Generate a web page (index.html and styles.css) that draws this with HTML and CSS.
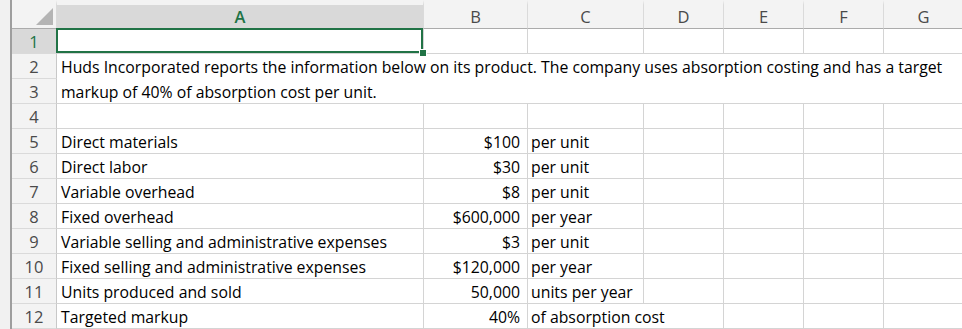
FILE: index.html
```html
<!DOCTYPE html>
<html lang="en">
<head>
    <meta charset="UTF-8">
    <title>Huds Incorporated</title>
    <link rel="stylesheet" href="styles.css">
</head>
<body>
    <div class="window">
        <div class="gutter"></div>
        <div class="sheet">
            <!-- column headers -->
            <div class="corner"><span class="corner-mark"></span></div>
            <div class="col-head active">A</div>
            <div class="col-head">B</div>
            <div class="col-head">C</div>
            <div class="col-head">D</div>
            <div class="col-head">E</div>
            <div class="col-head">F</div>
            <div class="col-head">G</div>

            <div class="row-head active">1</div>
            <div class="cell selected"></div>
            <div class="cell"></div><div class="cell"></div><div class="cell"></div>
            <div class="cell"></div><div class="cell"></div><div class="cell"></div>

            <div class="row-head">2</div>
            <div class="cell merged">Huds Incorporated reports the information below on its product. The company uses absorption costing and has a target<br>markup of 40% of absorption cost per unit.</div>
            <div class="row-head">3</div>

            <div class="row-head">4</div>
            <div class="cell"></div><div class="cell"></div><div class="cell"></div><div class="cell"></div>
            <div class="cell"></div><div class="cell"></div><div class="cell"></div>

            <div class="row-head">5</div>
            <div class="cell">Direct materials</div>
            <div class="cell num">$100</div>
            <div class="cell unit">per unit</div>
            <div class="cell"></div><div class="cell"></div><div class="cell"></div><div class="cell"></div>

            <div class="row-head">6</div>
            <div class="cell">Direct labor</div>
            <div class="cell num">$30</div>
            <div class="cell unit">per unit</div>
            <div class="cell"></div><div class="cell"></div><div class="cell"></div><div class="cell"></div>

            <div class="row-head">7</div>
            <div class="cell">Variable overhead</div>
            <div class="cell num">$8</div>
            <div class="cell unit">per unit</div>
            <div class="cell"></div><div class="cell"></div><div class="cell"></div><div class="cell"></div>

            <div class="row-head">8</div>
            <div class="cell">Fixed overhead</div>
            <div class="cell num">$600,000</div>
            <div class="cell unit">per year</div>
            <div class="cell"></div><div class="cell"></div><div class="cell"></div><div class="cell"></div>

            <div class="row-head">9</div>
            <div class="cell">Variable selling and administrative expenses</div>
            <div class="cell num">$3</div>
            <div class="cell unit">per unit</div>
            <div class="cell"></div><div class="cell"></div><div class="cell"></div><div class="cell"></div>

            <div class="row-head">10</div>
            <div class="cell">Fixed selling and administrative expenses</div>
            <div class="cell num">$120,000</div>
            <div class="cell unit">per year</div>
            <div class="cell"></div><div class="cell"></div><div class="cell"></div><div class="cell"></div>

            <div class="row-head">11</div>
            <div class="cell">Units produced and sold</div>
            <div class="cell num">50,000</div>
            <div class="cell unit">units per year</div>
            <div class="cell"></div><div class="cell"></div><div class="cell"></div><div class="cell"></div>

            <div class="row-head">12</div>
            <div class="cell">Targeted markup</div>
            <div class="cell num">40%</div>
            <div class="cell unit wide">of absorption cost</div>
            <div class="cell"></div><div class="cell"></div><div class="cell"></div>
        </div>
    </div>
</body>
</html>
```

FILE: styles.css
```css
body {
    margin: 0;
    background: #fff;
    font-family: 'Open Sans', 'Lato', sans-serif;
    font-size: 15.8px;
    color: #000;
}

.window {
    display: flex;
    width: 962px;
    height: 329px;
    overflow: hidden;
}

.gutter {
    width: 10px;
    flex-shrink: 0;
    background-color: #f1f1f1;
    border-right: 2px solid #9e9e9e;
}

.sheet {
    display: grid;
    grid-template-columns: 45px 367px 104px 116px 80px 80px 80px 80px;
    grid-template-rows: 29px repeat(12, 25px);
    flex-shrink: 0;
}

/* Headers */
.corner,
.col-head {
    box-sizing: border-box;
    background-color: #f3f3f3;
    border-top: 5px solid #f3f3f3;
    border-bottom: 1px solid #ababab;
}

.corner {
    display: flex;
    justify-content: flex-end;
    align-items: flex-end;
    padding: 0 3px 3px 0;
    border-right: 1px solid #dadada;
}

.corner-mark {
    width: 17px;
    height: 17px;
    background-color: #b4b4b4;
    clip-path: polygon(100% 0, 100% 100%, 0 100%);
}

.col-head {
    display: flex;
    align-items: center;
    justify-content: center;
    border-right: 1px solid #dadada;
    color: #4a4a4a;
    font-size: 16.5px;
}

.col-head.active {
    background-color: #d9d9d9;
    color: #217346;
    font-weight: 600;
}

.row-head {
    box-sizing: border-box;
    display: flex;
    align-items: center;
    justify-content: center;
    padding-top: 1px;
    background-color: #f3f3f3;
    border-right: 1px solid #c8c8c8;
    border-bottom: 1px solid #dadada;
    color: #4a4a4a;
    font-size: 16.5px;
}

.row-head.active {
    background-color: #d9d9d9;
    color: #217346;
}

/* Cells */
.cell {
    box-sizing: border-box;
    display: flex;
    align-items: center;
    padding: 1px 4px 0;
    border-right: 1px solid #d4d4d4;
    border-bottom: 1px solid #d4d4d4;
    white-space: nowrap;
}

.cell.num {
    justify-content: flex-end;
    padding-right: 7px;
}

.cell.unit {
    padding-left: 3px;
}

.cell.wide {
    grid-column: span 2;
}

.cell.merged {
    grid-column: 2 / -1;
    grid-row: span 2;
    display: block;
    line-height: 25px;
    border-right: none;
}

.cell.selected {
    position: relative;
}

.cell.selected::before {
    content: "";
    position: absolute;
    top: -1px;
    left: -1px;
    right: 0;
    bottom: 0;
    border: 2px solid #217346;
}

.cell.selected::after {
    content: "";
    position: absolute;
    right: -3px;
    bottom: -3px;
    width: 6px;
    height: 6px;
    background-color: #217346;
    box-shadow: 0 0 0 1px #fff;
}
```
